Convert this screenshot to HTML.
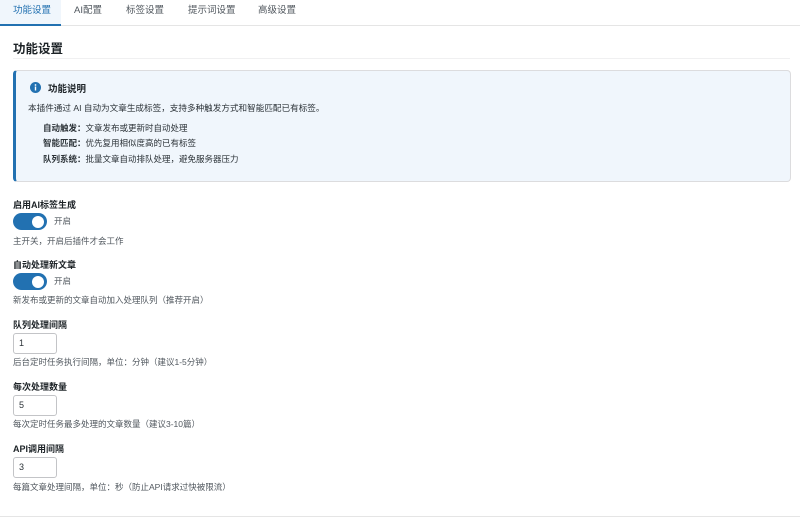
<!DOCTYPE html>
<html><head><meta charset="utf-8"><style>
*{margin:0;padding:0;box-sizing:border-box}
body{width:800px;height:518px;background:#fff;font-family:"Liberation Sans","Noto Sans CJK SC",sans-serif;color:#1d2327;position:relative;overflow:hidden;font-size:9px}
.a{position:absolute;white-space:nowrap}
.tab{position:absolute;top:0;height:26px;line-height:21px;font-size:9.5px;color:#50575e}
.lbl{font-weight:bold;font-size:9px;color:#1d2327}
.help{font-size:8.5px;color:#50575e;line-height:12px}
.tg{position:absolute;left:13px;width:34px;height:17px;border-radius:9px;background:#2271b1}
.tg::after{content:"";position:absolute;right:3px;top:2.5px;width:12px;height:12px;border-radius:50%;background:#fff}
.inp{position:absolute;left:13px;width:44px;height:21px;border:1px solid #c3c4c7;border-radius:3px;font-size:9px;line-height:19px;padding-left:5px;color:#2c3338}
</style></head><body>
<div class="a" style="left:0;top:25px;width:800px;height:1px;background:#e5e5e5"></div>
<div class="tab" style="left:0;width:61px;background:#f0f6fc;border-bottom:2px solid #2271b1;color:#2271b1;padding-left:13px">功能设置</div>
<div class="tab" style="left:74px">AI配置</div>
<div class="tab" style="left:126px">标签设置</div>
<div class="tab" style="left:188px">提示词设置</div>
<div class="tab" style="left:258px">高级设置</div>

<div class="a" style="left:13px;top:38px;font-size:12.5px;font-weight:bold">功能设置</div>
<div class="a" style="left:13px;top:58px;width:777px;height:1px;background:#f0f0f1"></div>

<div class="a" style="left:13px;top:70px;width:778px;height:112px;background:#f0f6fc;border:1px solid #dcdcde;border-left:3px solid #2271b1;border-radius:4px"></div>
<svg class="a" style="left:30px;top:82px" width="11" height="11" viewBox="0 0 11 11"><circle cx="5.5" cy="5.5" r="5.5" fill="#2271b1"/><rect x="4.8" y="4.5" width="1.4" height="4" fill="#fff"/><circle cx="5.5" cy="3" r="0.9" fill="#fff"/></svg>
<div class="a" style="left:48px;top:81px;font-weight:bold;font-size:9.5px">功能说明</div>
<div class="a" style="left:28px;top:102px;font-size:8.6px;color:#2c3338">本插件通过 AI 自动为文章生成标签，支持多种触发方式和智能匹配已有标签。</div>
<div class="a" style="left:43px;top:122px;font-size:8.5px;color:#2c3338"><b>自动触发：</b>文章发布或更新时自动处理</div>
<div class="a" style="left:43px;top:137px;font-size:8.5px;color:#2c3338"><b>智能匹配：</b>优先复用相似度高的已有标签</div>
<div class="a" style="left:43px;top:153px;font-size:8.5px;color:#2c3338"><b>队列系统：</b>批量文章自动排队处理，避免服务器压力</div>

<div class="a lbl" style="left:13px;top:198px">启用AI标签生成</div>
<div class="tg" style="top:213px"></div>
<div class="a help" style="left:54px;top:215px">开启</div>
<div class="a help" style="left:13px;top:235px">主开关，开启后插件才会工作</div>

<div class="a lbl" style="left:13px;top:258px">自动处理新文章</div>
<div class="tg" style="top:273px"></div>
<div class="a help" style="left:54px;top:275px">开启</div>
<div class="a help" style="left:13px;top:294px">新发布或更新的文章自动加入处理队列（推荐开启）</div>

<div class="a lbl" style="left:13px;top:318px">队列处理间隔</div>
<div class="inp" style="top:333px">1</div>
<div class="a help" style="left:13px;top:356px">后台定时任务执行间隔，单位：分钟（建议1-5分钟）</div>

<div class="a lbl" style="left:13px;top:380px">每次处理数量</div>
<div class="inp" style="top:395px">5</div>
<div class="a help" style="left:13px;top:418px">每次定时任务最多处理的文章数量（建议3-10篇）</div>

<div class="a lbl" style="left:13px;top:442px">API调用间隔</div>
<div class="inp" style="top:457px">3</div>
<div class="a help" style="left:13px;top:481px">每篇文章处理间隔，单位：秒（防止API请求过快被限流）</div>

<div class="a" style="left:0;top:516px;width:800px;height:1px;background:#e5e5e5"></div>
</body></html>
